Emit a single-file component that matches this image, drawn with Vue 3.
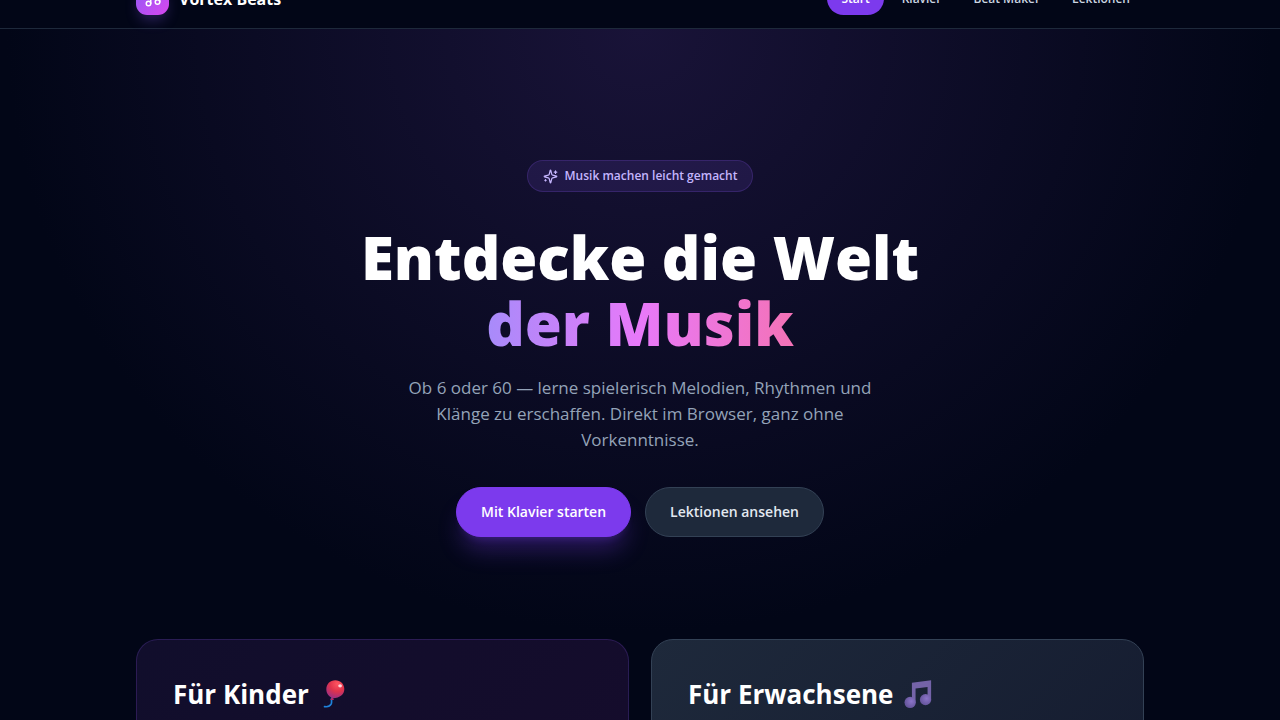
<script setup>
const links = [
  { label: 'Start', href: '#start', active: true },
  { label: 'Klavier', href: '#klavier', active: false },
  { label: 'Beat Maker', href: '#beat-maker', active: false },
  { label: 'Lektionen', href: '#lektionen', active: false },
]
</script>

<template>
  <div class="page">
    <header class="header">
      <div class="container bar">
        <a class="brand" href="#start">
          <span class="logo">
            <svg viewBox="0 0 24 24" width="18" height="18" fill="none" stroke="currentColor" stroke-width="2" stroke-linecap="round" stroke-linejoin="round" aria-hidden="true">
              <path d="M9 18V5l12-2v13" />
              <circle cx="6" cy="18" r="3" />
              <circle cx="18" cy="16" r="3" />
            </svg>
          </span>
          <span class="name">Vortex Beats</span>
        </a>
        <nav class="nav">
          <a v-for="link in links" :key="link.href" :href="link.href" class="link" :class="{ active: link.active }">{{ link.label }}</a>
        </nav>
      </div>
    </header>

    <main>
      <section class="hero">
        <div class="badge">
          <svg viewBox="0 0 24 24" width="15" height="15" fill="none" stroke="currentColor" stroke-width="2" stroke-linecap="round" stroke-linejoin="round" aria-hidden="true">
            <path d="M9.937 15.5A2 2 0 0 0 8.5 14.063l-6.135-1.582a.5.5 0 0 1 0-.962L8.5 9.936A2 2 0 0 0 9.937 8.5l1.582-6.135a.5.5 0 0 1 .963 0L14.063 8.5A2 2 0 0 0 15.5 9.937l6.135 1.581a.5.5 0 0 1 0 .964L15.5 14.063a2 2 0 0 0-1.437 1.437l-1.582 6.135a.5.5 0 0 1-.963 0z" />
            <path d="M20 3v4M22 5h-4M4 17v2M5 18H3" />
          </svg>
          <span>Musik machen leicht gemacht</span>
        </div>
        <h1 class="title">
          <span>Entdecke die Welt</span>
          <span class="accent">der Musik</span>
        </h1>
        <p class="lead">Ob 6 oder 60 — lerne spielerisch Melodien, Rhythmen und Klänge zu erschaffen. Direkt im Browser, ganz ohne Vorkenntnisse.</p>
        <div class="actions">
          <button class="btn primary" type="button">Mit Klavier starten</button>
          <button class="btn secondary" type="button">Lektionen ansehen</button>
        </div>
      </section>

      <section class="container cards">
        <article class="card kids">
          <h2 class="card-title">
            Für Kinder
            <svg viewBox="0 0 32 32" width="30" height="30" aria-hidden="true">
              <defs>
                <radialGradient id="balloon" cx="0.62" cy="0.2" r="0.85">
                  <stop offset="0" stop-color="#ff5560" />
                  <stop offset="0.5" stop-color="#e0334c" />
                  <stop offset="1" stop-color="#9b2f86" />
                </radialGradient>
              </defs>
              <path d="M13.500 20.500c-.6 2.300.6 4-.6 6.400-1.200 2.200-4 3-7 2.500" fill="none" stroke="#1f83dc" stroke-width="1.800" stroke-linecap="round" />
              <path d="M14.500 18.500l-2.600 3.800 4 .2z" fill="#b02a67" />
              <path d="M17.300 1.200c5.600 0 9.700 4.100 9.700 9.500 0 5.700-4.500 9.500-12.300 9.800-4.300-1.700-6.900-5-6.900-9.600 0-5.500 4-9.700 9.500-9.700z" fill="url(#balloon)" />
              <ellipse cx="22.500" cy="7.300" rx="2" ry="1.700" fill="#ffd5dc" />
            </svg>
          </h2>
        </article>
        <article class="card adults">
          <h2 class="card-title">
            Für Erwachsene
            <svg viewBox="0 0 32 32" width="30" height="30" aria-hidden="true">
              <defs>
                <radialGradient id="note" cx="0.6" cy="0.4" r="0.6">
                  <stop offset="0" stop-color="#8b74c8" />
                  <stop offset="1" stop-color="#65559b" />
                </radialGradient>
              </defs>
              <path d="M9.500 4L30 1.300v22h-3.800V8.500L13.400 10.200V26H9.500z" fill="#7463a8" />
              <circle cx="7.600" cy="25" r="6" fill="url(#note)" />
              <circle cx="24" cy="22" r="6" fill="url(#note)" />
            </svg>
          </h2>
        </article>
      </section>
    </main>
  </div>
</template>

<style>
body {
  background: #020617;
}
</style>

<style scoped>
.page {
  /* top of the header sits above the fold */
  margin-top: -31px;
  color: #fff;
  font-family: "Segoe UI", "Open Sans", "Noto Sans", sans-serif;
  background: #020617;
}

.page * {
  box-sizing: border-box;
}

.container {
  width: 100%;
  max-width: 1052px;
  margin: 0 auto;
  padding: 0 22px;
}

.header {
  border-bottom: 1px solid #1e293b;
}

.bar {
  display: flex;
  align-items: center;
  justify-content: space-between;
  height: 59px;
}

.brand {
  display: flex;
  align-items: center;
  gap: 10px;
  color: #fff;
  text-decoration: none;
}

.logo {
  display: grid;
  place-items: center;
  width: 33px;
  height: 33px;
  border-radius: 11px;
  background: linear-gradient(135deg, #8b5cf6, #d946ef);
  box-shadow: 0 8px 14px -3px rgba(139, 92, 246, 0.3);
}

.name {
  font-size: 16px;
  font-weight: 700;
}

.nav {
  display: flex;
  gap: 4px;
}

.link {
  padding: 7px 14px;
  border-radius: 17px;
  color: #cbd5e1;
  font-size: 12px;
  font-weight: 600;
  line-height: 19px;
  text-decoration: none;
}

.link.active {
  background: #7c3aed;
  color: #fff;
}

.hero {
  display: flex;
  flex-direction: column;
  align-items: center;
  padding: 131px 22px 102px;
  text-align: center;
  background: radial-gradient(ellipse at top, #191338, #020617 70%);
}

.badge {
  display: flex;
  align-items: center;
  gap: 7px;
  padding: 5px 15px;
  border: 1px solid rgba(139, 92, 246, 0.2);
  border-radius: 16px;
  background: rgba(139, 92, 246, 0.12);
  color: #c4b5fd;
  font-size: 12px;
  font-weight: 600;
  line-height: 20px;
}

.title {
  display: flex;
  flex-direction: column;
  align-items: center;
  margin: 32px 0 0;
  font-size: 60px;
  font-weight: 800;
  line-height: 66px;
}

.accent {
  color: transparent;
  background: linear-gradient(90deg, #a78bfa, #e879f9, #f472b6);
  background-clip: text;
  -webkit-background-clip: text;
}

.lead {
  max-width: 490px;
  margin: 19px 0 0;
  color: #94a3b8;
  font-size: 17px;
  line-height: 26px;
}

.actions {
  display: flex;
  gap: 14px;
  margin-top: 34px;
}

.btn {
  padding: 13px 24px;
  border: 1px solid transparent;
  border-radius: 25px;
  font-family: inherit;
  font-size: 14px;
  font-weight: 600;
  line-height: 22px;
  cursor: pointer;
}

.primary {
  background: #7c3aed;
  border-color: #7c3aed;
  color: #fff;
  box-shadow: 0 18px 23px -5px rgba(124, 58, 237, 0.3), 0 7px 9px -6px rgba(124, 58, 237, 0.3);
}

.secondary {
  background: #1e293b;
  border-color: #334155;
  color: #e2e8f0;
}

.cards {
  display: grid;
  grid-template-columns: 1fr 1fr;
  gap: 22px;
}

.card {
  min-height: 140px;
  padding: 36px;
  border: 1px solid;
  border-radius: 22px;
}

.kids {
  border-color: rgba(139, 92, 246, 0.2);
  background: linear-gradient(135deg, #110e2c, #150c2c);
}

.adults {
  border-color: #334155;
  background: linear-gradient(135deg, #1e293b, #151c30);
}

.card-title {
  display: flex;
  align-items: center;
  gap: 10px;
  margin: 0;
  font-size: 26px;
  font-weight: 700;
  line-height: 36px;
}
</style>
